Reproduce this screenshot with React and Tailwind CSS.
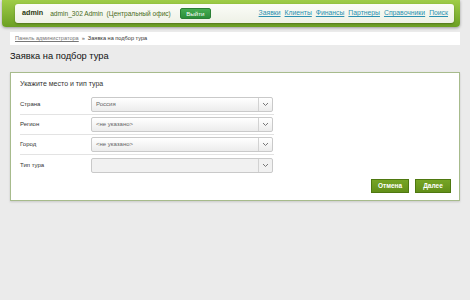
import React from "react";

function Chevron() {
  return (
    <svg width="7" height="5" viewBox="0 0 7 5" className="block">
      <path d="M1 1 L3.5 3.5 L6 1" fill="none" stroke="#777" strokeWidth="1" />
    </svg>
  );
}

function Select({ value, disabled }) {
  return (
    <div
      className={
        "w-[182px] h-[15px] rounded-[2px] border border-[#c9c9c9] flex items-stretch " +
        (disabled
          ? "bg-[#f1f1f1]"
          : "bg-gradient-to-b from-[#ffffff] to-[#ececec]")
      }
    >
      <div className="flex-1 flex items-center pl-[4px] text-[6px] text-[#666]">{value}</div>
      <div className="w-[14px] border-l border-[#d2d2d2] flex items-center justify-center">
        <Chevron />
      </div>
    </div>
  );
}

function Row({ label, value, disabled, last }) {
  return (
    <div
      className={
        "h-[20px] flex items-center " + (last ? "" : "border-b border-[#e3e3e3]")
      }
    >
      <div className="w-[71px] text-[6px] text-[#333]">{label}</div>
      <Select value={value} disabled={disabled} />
    </div>
  );
}

export default function App() {
  const links = ["Заявки", "Клиенты", "Финансы", "Партнеры", "Справочники", "Поиск"];
  return (
    <div
      className="w-[470px] h-[300px] overflow-hidden bg-[#ebebeb] flex flex-col"
      style={{ fontFamily: '"Liberation Sans", Arial, sans-serif' }}
    >
      {/* Header green bar */}
      <div className="ml-[2px] w-[458px] h-[27px] rounded-b-[4px] bg-gradient-to-b from-[#9fcd48] to-[#6b9f22] shadow-[0_1px_3px_rgba(0,0,0,0.35)] pt-[4px] pl-[13px] pr-[6px]">
        <div className="h-[19px] rounded-[3px] bg-gradient-to-b from-[#fbfcf8] to-[#eef1e6] shadow-[0_1px_2px_rgba(0,0,0,0.3)] flex items-center pl-[7px] pr-[6px]">
          <span className="text-[7.2px] font-bold text-[#2d3a12]">admin</span>
          <span className="ml-[7px] text-[6.6px] text-[#4a6b1a]">admin_302 Admin&nbsp; (Центральный офис)</span>
          <div className="ml-[9px] w-[31px] h-[11px] rounded-[2px] bg-gradient-to-b from-[#45ad52] to-[#2c8d3a] border border-[#2a7f35] flex items-center justify-center text-[6.2px] text-white">
            Выйти
          </div>
          <div className="ml-auto flex gap-[4px]">
            {links.map((l) => (
              <span key={l} className="text-[6.8px] text-[#2a90b0] underline">
                {l}
              </span>
            ))}
          </div>
        </div>
      </div>

      {/* Breadcrumb */}
      <div className="mt-[5px] ml-[10px] w-[450px] h-[13px] bg-white flex items-center pl-[5px] text-[5.6px]">
        <span className="text-[#777] underline">Панель администратора</span>
        <span className="text-[#555] mx-[3px]">»</span>
        <span className="text-[#333]">Заявка на подбор тура</span>
      </div>

      {/* Title */}
      <div className="mt-[6px] ml-[10px] h-[12px] flex items-center text-[9.3px] text-[#111]">
        Заявка на подбор тура
      </div>

      {/* Panel */}
      <div className="mt-[9px] ml-[10px] w-[450px] h-[129px] bg-white border border-[#a7bb8c] shadow-[0_1px_2px_rgba(0,0,0,0.15)] pt-[6px] pl-[9px] pr-[8px] flex flex-col">
        <div className="h-[11px] flex items-center text-[7px] text-[#333]">
          Укажите место и тип тура
        </div>
        <div className="mt-[5px] w-[254px] flex flex-col">
          <Row label="Страна" value="Россия" />
          <Row label="Регион" value="<не указано>" />
          <Row label="Город" value="<не указано>" />
          <Row label="Тип тура" value="" disabled last />
        </div>
        <div className="mt-[4px] flex justify-end gap-[6px]">
          <div className="w-[38px] h-[14px] bg-gradient-to-b from-[#76a525] to-[#628f19] border border-[#4e7810] flex items-center justify-center text-[6.5px] font-bold text-white">
            Отмена
          </div>
          <div className="w-[36px] h-[14px] bg-gradient-to-b from-[#76a525] to-[#628f19] border border-[#4e7810] flex items-center justify-center text-[6.5px] font-bold text-white">
            Далее
          </div>
        </div>
      </div>
    </div>
  );
}
